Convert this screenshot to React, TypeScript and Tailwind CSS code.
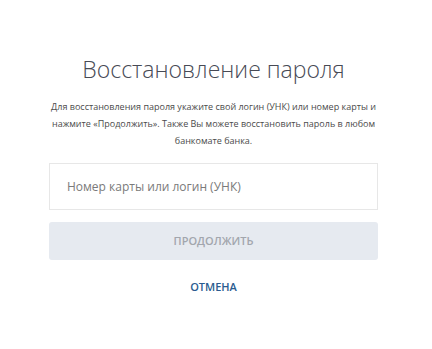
export default function App() {
  return (
    <div className="min-h-[349px] w-[432px] bg-white font-['Open_Sans',sans-serif]">
      <div className="ml-[49px] flex w-[329px] flex-col items-center pt-[53px]">
        <h1 className="text-[23px] font-light leading-[32px] text-[#474a55]">Восстановление пароля</h1>
        <p className="mt-[13px] w-[340px] text-center text-[9px] leading-[17px] text-[#4b4b4b]">
          Для восстановления пароля укажите свой логин (УНК) или номер карты и нажмите «Продолжить». Также Вы можете восстановить пароль в любом банкомате банка.
        </p>
        <div className="mt-[14px] flex h-[47px] w-full items-center border border-[#e7e7e7] px-[17px] text-[12px] text-[#7a7a7a]">
          Номер карты или логин (УНК)
        </div>
        <button className="mt-[12px] flex h-[38px] w-full items-center justify-center rounded-[3px] bg-[#e6eaf0] text-[11px] font-semibold text-[#a2a6ad]">
          ПРОДОЛЖИТЬ
        </button>
        <button className="mt-[19px] text-[11px] font-semibold text-[#2a5b8f]">ОТМЕНА</button>
      </div>
    </div>
  )
}
